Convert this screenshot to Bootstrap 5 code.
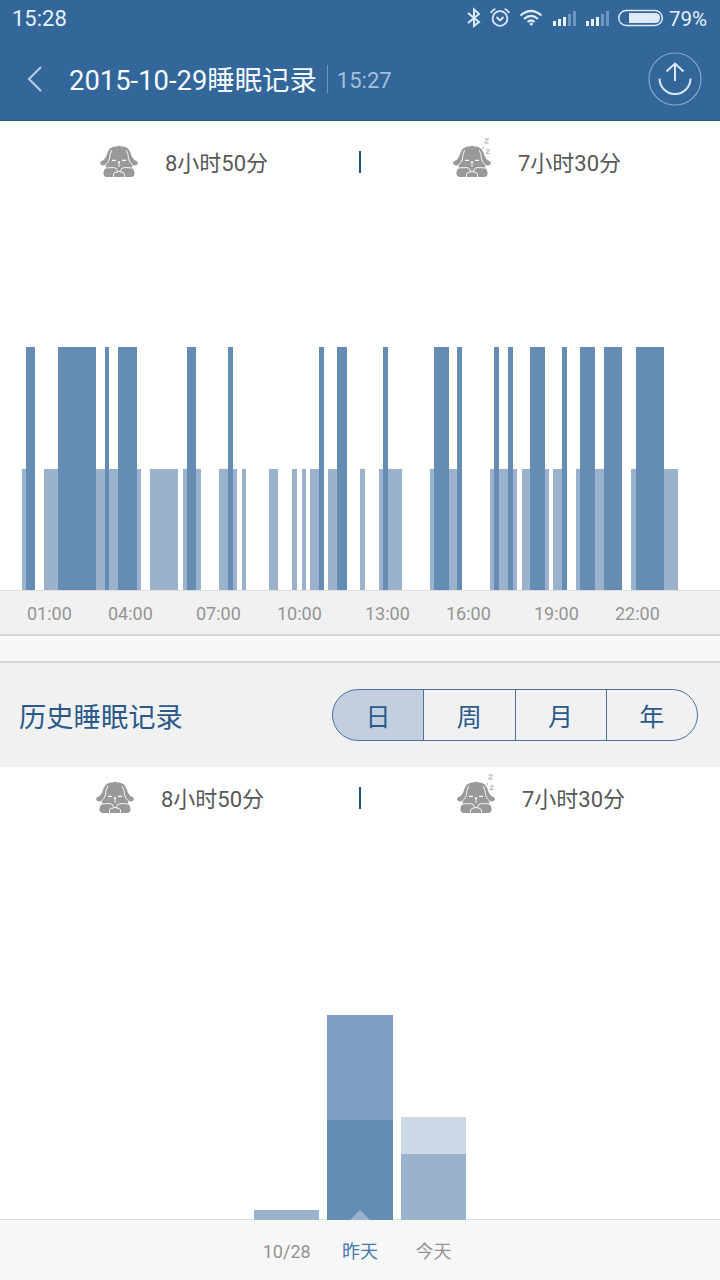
<!DOCTYPE html>
<html lang="zh-CN">
<head>
<meta charset="utf-8">
<meta name="viewport" content="width=device-width, initial-scale=1">
<title>睡眠记录</title>
<link href="https://cdn.jsdelivr.net/npm/bootstrap@5.3.0/dist/css/bootstrap.min.css" rel="stylesheet">
<style>
body{font-family:Roboto,"Noto Sans CJK SC",sans-serif;background:#fff;color:#505050;line-height:1;overflow:hidden}
svg{display:block;flex:none}
.screen{width:720px;height:1280px}
.screen>*{flex:none}
.topbar{background:#336699;height:121px;border-bottom:1px solid #2a5a8a;color:#f4faff}
.statusbar{height:38px;padding:0 13px 0 12px;font-size:22px;color:#e6f1fc}
.battery{margin-left:5px;font-size:20.5px}
.titlebar{height:83px;padding:0 18px 1px 26px}
.titlebar h1{font-size:27.4px;margin:0 0 0 26px;padding-top:6px;font-weight:400;line-height:1}
.titlebar time{font-size:22px;color:#a3bfdd;border-left:1px solid #6d95bf;margin-left:10px;padding-left:9px;height:28px;line-height:31px}
.stats{color:#585858}
.day-stats{height:82px}
.history-stats{height:62px}
.stats .half{width:359px;font-size:22px}
.stats .half svg{margin-bottom:1px}
.stats .half span{margin-left:26px;padding-top:4px}
.tick{width:2px;height:22px;background:#235273}
.daychart{height:387px;padding-left:22px}
.seg{flex:none}
.light-sleep{height:121.5px;background:#9ab2cc}
.deep-sleep{height:243.5px;background:#658cb3}
.axis{height:46px;background:#f1f1f1;border-top:1px solid #dedede;border-bottom:2px solid #d4d4d4;font-size:18px;color:#949494;padding:2px 0 0 5px}
.axis span{flex:none;width:44.5px;text-align:center}
.strip{height:25px;background:#f8f8f8}
.history{height:106px;background:#f1f1f1;border-top:2px solid #d6d6d6;padding:0 22px 0 19px}
.history h2{font-size:27.3px;font-weight:400;color:#2b5a8a;margin:0;padding-top:6px}
.period{width:366px;height:52px}
.period .btn{--bs-btn-color:#2b5a8a;--bs-btn-border-color:#49729e;--bs-btn-active-color:#2b5a8a;--bs-btn-active-bg:#c3cfdf;--bs-btn-active-border-color:#49729e;--bs-btn-font-size:25px;--bs-btn-line-height:1;--bs-btn-padding-x:0;--bs-btn-padding-y:0;width:25%;padding-top:4px}
.period .btn:first-child{border-radius:26px 0 0 26px}
.period .btn:last-child{border-radius:0 26px 26px 0}
.history-chart{height:391px;margin-bottom:-1px;padding-left:254px;gap:8px;z-index:1}
.daybar{width:65.4px;flex:none;position:relative}
.pointer{position:absolute;left:23px;bottom:0}
.days{height:61px;background:#f7f7f7;border-top:1px solid #dedede;padding:3px 0 0 254px;gap:8px;font-size:18px;color:#939393}
.days span{width:65.4px;text-align:center;flex:none}
.days .chosen{color:#4678ab}
</style>
</head>
<body>
<svg width="0" height="0" class="position-absolute">
  <defs>
    <g id="puppy">
      <path fill="#999" d="M19 2.200Q20 .8 21 2.200Q27 2.500 29.500 5Q31.500 8 33 13Q34.500 16 38.300 17.500Q39.800 19.500 38 20.800Q36 22 33.500 20.800L33 24Q35.500 25.500 35.600 29Q35.500 32.800 32 33H8Q4.500 32.800 4.400 29Q4.500 25.500 7 24L6.500 20.800Q4 22 2 20.800Q.2 19.500 1.700 17.500Q5.500 16 7 13Q8.500 8 10.500 5Q13 2.500 19 2.200Z"/>
      <path fill="none" stroke="#fff" stroke-width=".9" stroke-linecap="round" d="M12.500 6.500Q10.500 10 10.500 15Q9.500 18.500 6.500 21M27.500 6.500Q29.500 10 29.500 15Q30.500 18.500 33.500 21M7 24Q11 23.500 15 23.600Q18.500 24 18.500 27.500H21.500Q21.500 24 25 23.600Q29 23.500 33 24M18.500 28Q15 27.500 14.500 30V33M21.500 28Q25 27.500 25.500 30V33M20 18V22.500"/>
      <path stroke="#fff" stroke-width="1.300" d="M13 16.300H17M23 16.300H27"/>
      <path fill="#fff" d="M18.300 17.500H21.700L20 19.500Z"/>
    </g>
    <g id="snore" fill="none" stroke="#aaa" stroke-width="1"><path d="M32.500-5H36.500L32.500-1H36.500M34 6H37.500L34 9.500H37.500M31.500 3L31 5"/></g>
  </defs>
</svg>
<div class="screen d-flex flex-column">
  <header class="topbar">
    <div class="statusbar d-flex align-items-center justify-content-between">
      <span>15:28</span>
      <div class="d-flex align-items-center">
        <svg width="200" height="30" viewBox="464 4 200 30" fill="none" stroke="#dcebfa">
          <path stroke-width="2" d="M468 13L479 22L474 26V9.500L479 14L468 23"/>
          <g stroke-width="1.800"><circle cx="500" cy="18.500" r="7.400"/><path d="M496.500 17L500 20.500L503.500 17M491 13Q492 10 495.500 9M509 13Q508 10 504.500 9"/></g>
          <g stroke-width="2.200"><path d="M520.500 15.500Q531 6.500 541.500 15.500M524 19Q531 12.800 538 19M527.500 22Q531 19 534.500 22"/></g><circle cx="531.300" cy="24" r="1.600" fill="#dcebfa" stroke="none"/>
          <g stroke="none" fill="#e6f1fc"><path d="M553 21h3v5h-3zM558 19h3v7h-3zM563 17h3v9h-3zM586 21h3v5h-3zM591 19h3v7h-3zM596 17h3v9h-3z"/><path fill="#6e97c2" d="M568 14h3v12h-3zM573 11h3v15h-3zM601 14h3v12h-3zM606 11h3v15h-3z"/></g>
          <rect x="618.800" y="10.500" width="43.500" height="15" rx="7.500" stroke-width="1.500"/><path fill="#dfeaf8" stroke="none" d="M629 13H655Q660 13 660 18T655 23H629Z"/>
        </svg>
        <span class="battery">79%</span>
      </div>
    </div>
    <div class="titlebar d-flex align-items-center">
      <svg width="17" height="28" fill="none" stroke="#b3cce6" stroke-width="2.200"><path d="M15 2L3 14L15 26"/></svg>
      <h1>2015-10-29睡眠记录</h1>
      <time>15:27</time>
      <svg class="ms-auto" width="54" height="54" fill="none" stroke="#dbe9f8" stroke-width="2"><circle cx="27" cy="27" r="26" stroke="#86a9d0" stroke-width="1.200"/><path d="M11.500 26.500A15.500 15.500 0 0 0 42.500 26.500M27 29V12M18.500 19.500L27 11.500L35.500 19.500"/></svg>
    </div>
  </header>

  <section class="stats day-stats d-flex align-items-center">
    <div class="half d-flex align-items-center justify-content-center ps-2 pe-0"><svg width="40" height="35"><use href="#puppy"/></svg><span>8小时50分</span></div>
    <div class="tick"></div>
    <div class="half d-flex align-items-center justify-content-center pe-2"><svg width="40" height="35" overflow="visible"><use href="#puppy"/><use href="#snore"/></svg><span>7小时30分</span></div>
  </section>
  <section class="daychart d-flex align-items-end" id="daychart"></section>
  <div class="axis d-flex align-items-center" id="axis"></div>
  <div class="strip"></div>

  <section class="history d-flex align-items-center justify-content-between">
    <h2>历史睡眠记录</h2>
    <div class="period btn-group" role="group">
      <button type="button" class="btn active">日</button>
      <button type="button" class="btn">周</button>
      <button type="button" class="btn">月</button>
      <button type="button" class="btn">年</button>
    </div>
  </section>
  <section class="stats history-stats d-flex">
    <div class="half d-flex align-items-center justify-content-center"><svg width="40" height="35"><use href="#puppy"/></svg><span>8小时50分</span></div>
    <div class="tick align-self-center"></div>
    <div class="half d-flex align-items-center justify-content-center"><svg width="40" height="35" overflow="visible"><use href="#puppy"/><use href="#snore"/></svg><span>7小时30分</span></div>
  </section>
  <section class="history-chart d-flex align-items-end">
    <div class="daybar" style="height:10px;background:#9ab2cc"></div>
    <div class="daybar" style="height:205px;background:linear-gradient(#809ec1 105px,#658cb3 105px)"><svg class="pointer" width="20" height="10"><path fill="#9ab2cc" d="M0 10L10 0L20 10Z"/></svg></div>
    <div class="daybar" style="height:103px;background:linear-gradient(#ccd8e6 37px,#9ab2cc 37px)"></div>
  </section>
  <footer class="days d-flex align-items-center"><span>10/28</span><span class="chosen">昨天</span><span>今天</span></footer>
</div>
<script src="https://cdn.jsdelivr.net/npm/bootstrap@5.3.0/dist/js/bootstrap.bundle.min.js"></script>
<script>
// Each entry: sleep state (L light, D deep, - awake) and the position at which it ends.
const night = "L26.3 D35.5 -44.5 L58.5 D96 L105 D109.5 L118.5 D137 L141.5 -150.5 L178.5 -183 L187.5 D196.5 L201 -219.5 L228.5 D233 L237.5 -242 L246.5 -269.5 L278.5 -292.3 L297 -301.7 L306 -310.5 L319.5 D324 -328.5 L337.3 D346.7 -360.3 L365 -379 L383.5 D388 L402 -430 L434.5 D448.7 L457.5 D462 -490 L494.5 D499 L508 D512.7 L517 -521.7 L530.5 D544.7 L549 -553.5 L562.5 D567 -576.3 L580.5 D594.7 L603.7 D622 -631 L635.7 D663.7 L677.7";
const kinds = {L: "light-sleep", D: "deep-sleep", "-": ""};
let from = 22;
for (const part of night.split(" ")) {
  const to = parseFloat(part.slice(1));
  const seg = document.createElement("div");
  seg.className = "seg " + kinds[part[0]];
  seg.style.width = (to - from) + "px";
  daychart.append(seg);
  from = to;
}
let edge = 5;
for (const [text, left] of [["01:00",27],["04:00",108],["07:00",196],["10:00",277],["13:00",365],["16:00",446],["19:00",534],["22:00",615]]) {
  const label = document.createElement("span");
  label.textContent = text;
  label.style.marginLeft = (left - edge) + "px";
  axis.append(label);
  edge = left + 44.5;
}
</script>
</body>
</html>
